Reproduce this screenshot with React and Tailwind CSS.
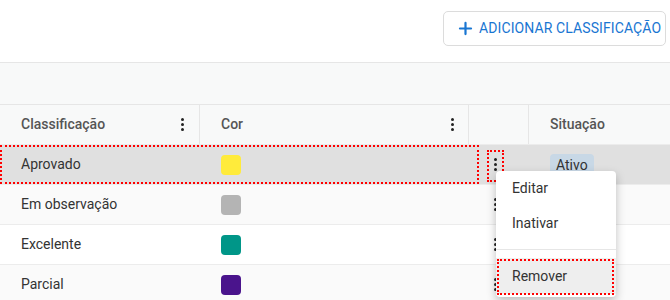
import { Plus } from "lucide-react";

const rows = [
  { name: "Aprovado", color: "bg-[#ffeb3b]", bg: "bg-[#e0e0e0]" },
  { name: "Em observação", color: "bg-[#b4b4b4]", bg: "bg-[#fafafa]" },
  { name: "Excelente", color: "bg-[#009688]", bg: "bg-white" },
  { name: "Parcial", color: "bg-[#4a148c]", bg: "bg-[#fafafa]" },
];

function Kebab() {
  return (
    <span className="flex flex-col items-center gap-[2px]">
      <span className="w-[3px] h-[3px] rounded-full bg-[#222]" />
      <span className="w-[3px] h-[3px] rounded-full bg-[#222]" />
      <span className="w-[3px] h-[3px] rounded-full bg-[#222]" />
    </span>
  );
}

export default function App() {
  return (
    <div
      className="relative w-[670px] h-[300px] overflow-hidden bg-white text-[14px] text-[#333]"
      style={{ fontFamily: "Roboto, 'Liberation Sans', sans-serif" }}
    >
      {/* Top bar */}
      <div className="h-[62px] flex items-start justify-end pt-[11px] pr-[4px]">
        <button className="h-[35px] w-[223px] flex items-center gap-[4px] pl-[12px] border border-[#dcdcdc] rounded-[5px] text-[#1976d2] text-[14px] tracking-[0.1px]">
          <Plus size={19} strokeWidth={2.8} />
          ADICIONAR CLASSIFICAÇÃO
        </button>
      </div>

      {/* Toolbar */}
      <div className="h-[43px] border-y border-[#e6e6e6] bg-[#f8f9f9]" />

      {/* Header */}
      <div className="h-[40px] flex bg-[#f8f9f9] border-b border-[#ececec] text-[#555] font-medium">
        <div className="w-[200px] flex items-center justify-between pl-[21px] pr-[15px] border-r border-[#e6e6e6]">
          Classificação
          <Kebab />
        </div>
        <div className="w-[269px] flex items-center justify-between pl-[21px] pr-[14px] border-r border-[#e6e6e6]">
          Cor
          <Kebab />
        </div>
        <div className="w-[60px] border-r border-[#e6e6e6]" />
        <div className="flex-1 flex items-center pl-[21px]">Situação</div>
      </div>

      {/* Rows */}
      {rows.map((r, i) => (
        <div key={r.name} className={`h-[40px] flex border-b border-[#ececec] ${r.bg}`}>
          <div className="w-[200px] flex items-center pl-[21px]">{r.name}</div>
          <div className="w-[269px] flex items-center pl-[21px]">
            <span className={`w-[20px] h-[20px] rounded-[4px] ${r.color}`} />
          </div>
          <div className="w-[60px] flex items-center pl-[25px]">
            <Kebab />
          </div>
          <div className="flex-1 flex items-center pl-[21px] pt-[2px]">
            {i === 0 && (
              <span className="px-[6px] py-[1px] rounded-[4px] bg-[#c8d8e6] text-[#333]">Ativo</span>
            )}
          </div>
        </div>
      ))}

      {/* Highlight outlines */}
      <div className="absolute left-0 top-[145px] w-[479px] h-[39px] border-2 border-dotted border-[#ff0000]" />
      <div className="absolute left-[487px] top-[150px] w-[17px] h-[32px] border-2 border-dotted border-[#ff0000]" />

      {/* Context menu */}
      <div className="absolute left-[496px] top-[171px] w-[120px] bg-white rounded-[4px] shadow-[0_4px_10px_rgba(0,0,0,0.25)] pb-[3px]">
        <div className="h-[35px] flex items-center pl-[16px]">Editar</div>
        <div className="h-[35px] flex items-center pl-[16px]">Inativar</div>
        <div className="my-[8px] border-t border-[#e6e6e6]" />
        <div className="relative h-[36px] flex items-center pl-[16px] bg-[#eeeeee]">
          Remover
          <div className="absolute left-[1px] right-[2px] top-[1px] bottom-[-1px] border-2 border-dotted border-[#ff0000]" />
        </div>
      </div>
    </div>
  );
}
